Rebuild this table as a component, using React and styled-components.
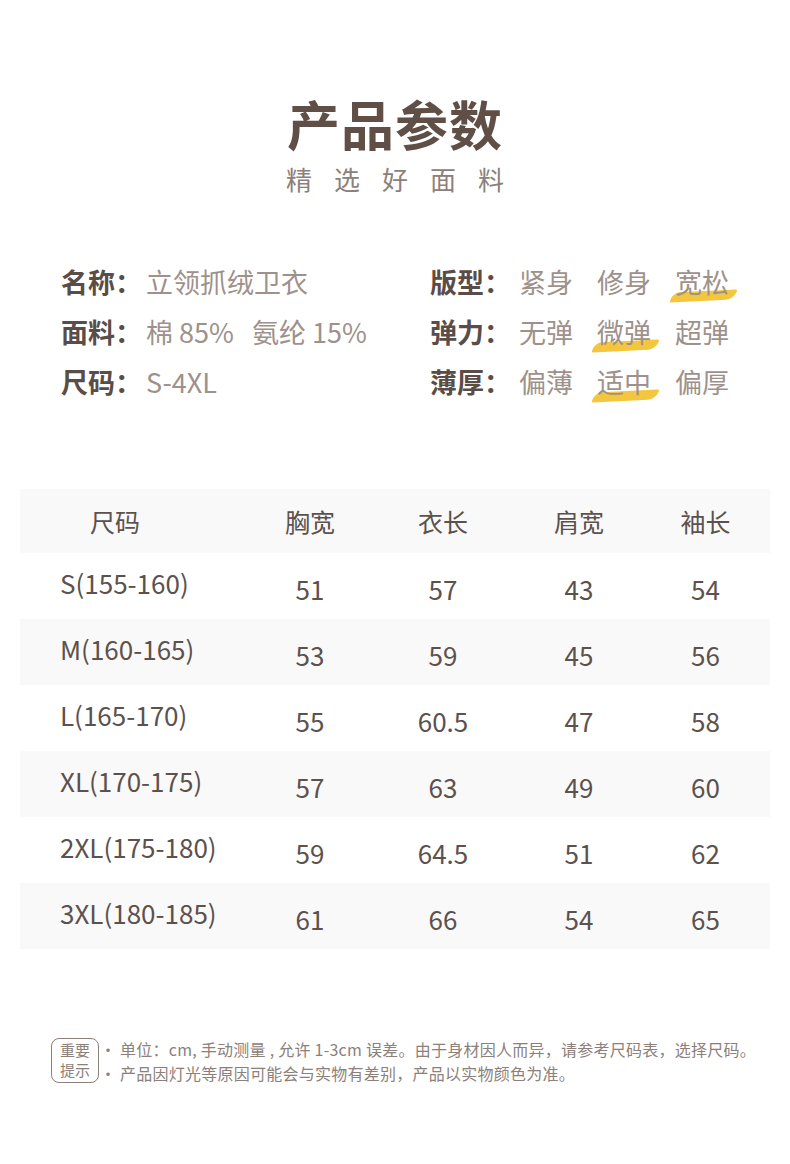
import React from 'react';
import styled, { createGlobalStyle } from 'styled-components';

const GlobalStyle = createGlobalStyle`
  html, body {
    margin: 0;
    padding: 0;
    background: #ffffff;
  }
  body {
    font-family: "Noto Sans CJK SC", "Noto Sans", sans-serif;
  }
`;

const info = {
  left: [
    { label: '名称', value: '立领抓绒卫衣' },
    { label: '面料', value: '棉 85%\u00a0\u00a0\u00a0氨纶 15%' },
    { label: '尺码', value: 'S-4XL' },
  ],
  right: [
    { label: '版型', options: ['紧身', '修身', '宽松'], active: 2 },
    { label: '弹力', options: ['无弹', '微弹', '超弹'], active: 1 },
    { label: '薄厚', options: ['偏薄', '适中', '偏厚'], active: 1 },
  ],
};

const headers = ['尺码', '胸宽', '衣长', '肩宽', '袖长'];

const rows = [
  ['S(155-160)', '51', '57', '43', '54'],
  ['M(160-165)', '53', '59', '45', '56'],
  ['L(165-170)', '55', '60.5', '47', '58'],
  ['XL(170-175)', '57', '63', '49', '60'],
  ['2XL(175-180)', '59', '64.5', '51', '62'],
  ['3XL(180-185)', '61', '66', '54', '65'],
];

const App = () => {
  return (
    <Page>
      <GlobalStyle />
      <Header>
        <Title>产品参数</Title>
        <Subtitle>精选好面料</Subtitle>
      </Header>

      <InfoGrid>
        <InfoColumn>
          {info.left.map((item) => (
            <InfoRow key={item.label}>
              <Label>{item.label}：</Label>
              <Value>{item.value}</Value>
            </InfoRow>
          ))}
        </InfoColumn>
        <InfoColumn>
          {info.right.map((item) => (
            <InfoRow key={item.label}>
              <Label>{item.label}：</Label>
              <Options>
                {item.options.map((opt, i) => (
                  <Option key={opt} $active={i === item.active}>{opt}</Option>
                ))}
              </Options>
            </InfoRow>
          ))}
        </InfoColumn>
      </InfoGrid>

      <Table>
        <TableRow $shaded $head>
          {headers.map((h, i) => (
            <HeadCell key={h} $first={i === 0}>{h}</HeadCell>
          ))}
        </TableRow>
        {rows.map((row, r) => (
          <TableRow key={row[0]} $shaded={r % 2 === 1}>
            {row.map((cell, i) =>
              i === 0 ? <SizeCell key={i}>{cell}</SizeCell> : <NumCell key={i}>{cell}</NumCell>
            )}
          </TableRow>
        ))}
      </Table>

      <Notes>
        <NoteBadge>重要<br />提示</NoteBadge>
        <NoteList>
          <NoteLine>• 单位：cm, 手动测量 , 允许 1-3cm 误差。由于身材因人而异，请参考尺码表，选择尺码。</NoteLine>
          <NoteLine>• 产品因灯光等原因可能会与实物有差别，产品以实物颜色为准。</NoteLine>
        </NoteList>
      </Notes>
    </Page>
  );
};

export default App;

const Page = styled.div`
  width: 790px;
  height: 1164px;
  box-sizing: border-box;
  padding-top: 93px;
  background: #ffffff;
  overflow: hidden;
`;

const Header = styled.header`
  display: flex;
  flex-direction: column;
  align-items: center;
`;

const Title = styled.h1`
  margin: 0;
  font-size: 53px;
  line-height: 60px;
  font-weight: 700;
  color: #5f4f47;
  letter-spacing: 1px;
`;

const Subtitle = styled.div`
  margin-top: 10px;
  padding-left: 22px;
  font-size: 26px;
  line-height: 32px;
  letter-spacing: 22px;
  color: #8c807a;
`;

const InfoGrid = styled.div`
  display: grid;
  grid-template-columns: 369px 1fr;
  padding: 67px 0 0 61px;
`;

const InfoColumn = styled.div`
  display: flex;
  flex-direction: column;
  gap: 11px;
`;

const InfoRow = styled.div`
  display: flex;
  align-items: center;
  height: 39px;
  font-size: 27px;
`;

const Label = styled.span`
  font-weight: 700;
  color: #5a4d47;
  width: 85px;
  flex-shrink: 0;
`;

const Value = styled.span`
  color: #9e918b;
`;

const Options = styled.div`
  display: flex;
  gap: 24px;
  margin-left: 4px;
`;

const Option = styled.span`
  position: relative;
  color: #9e918b;
  z-index: 0;

  &::after {
    content: '';
    display: ${(p) => (p.$active ? 'block' : 'none')};
    position: absolute;
    left: -3px;
    right: -6px;
    bottom: 0px;
    height: 10px;
    background: #f4c63d;
    border-radius: 10px 4px 12px 3px;
    transform: skewX(-25deg) rotate(-3deg);
    z-index: -1;
  }
`;

const Table = styled.div`
  margin: 88px 20px 0;
  display: flex;
  flex-direction: column;
`;

const TableRow = styled.div`
  display: grid;
  grid-template-columns: 225px 130px 136px 136px 117px;
  align-items: center;
  height: ${(p) => (p.$head ? '64px' : '66px')};
  background: ${(p) => (p.$shaded ? '#f9f9f9' : '#ffffff')};
  color: #5b514d;
`;

const HeadCell = styled.div`
  text-align: center;
  font-size: 25px;
  padding-right: ${(p) => (p.$first ? '35px' : '0')};
`;

const SizeCell = styled.div`
  padding: 0 0 8px 40px;
  font-size: 26px;
`;

const NumCell = styled.div`
  text-align: center;
  padding-top: 5px;
  font-size: 26px;
`;

const Notes = styled.div`
  display: flex;
  align-items: center;
  gap: 1px;
  margin: 89px 0 0 51px;
`;

const NoteBadge = styled.div`
  width: 48px;
  height: 45px;
  box-sizing: border-box;
  border: 1px solid #8c807a;
  border-radius: 8px;
  color: #8c807a;
  font-size: 15px;
  line-height: 20px;
  text-align: center;
  padding-top: 1px;
`;

const NoteList = styled.div`
  display: flex;
  flex-direction: column;
  gap: 4px;
`;

const NoteLine = styled.div`
  font-size: 16px;
  line-height: 20px;
  letter-spacing: 0.25px;
  color: #8c807a;
`;
